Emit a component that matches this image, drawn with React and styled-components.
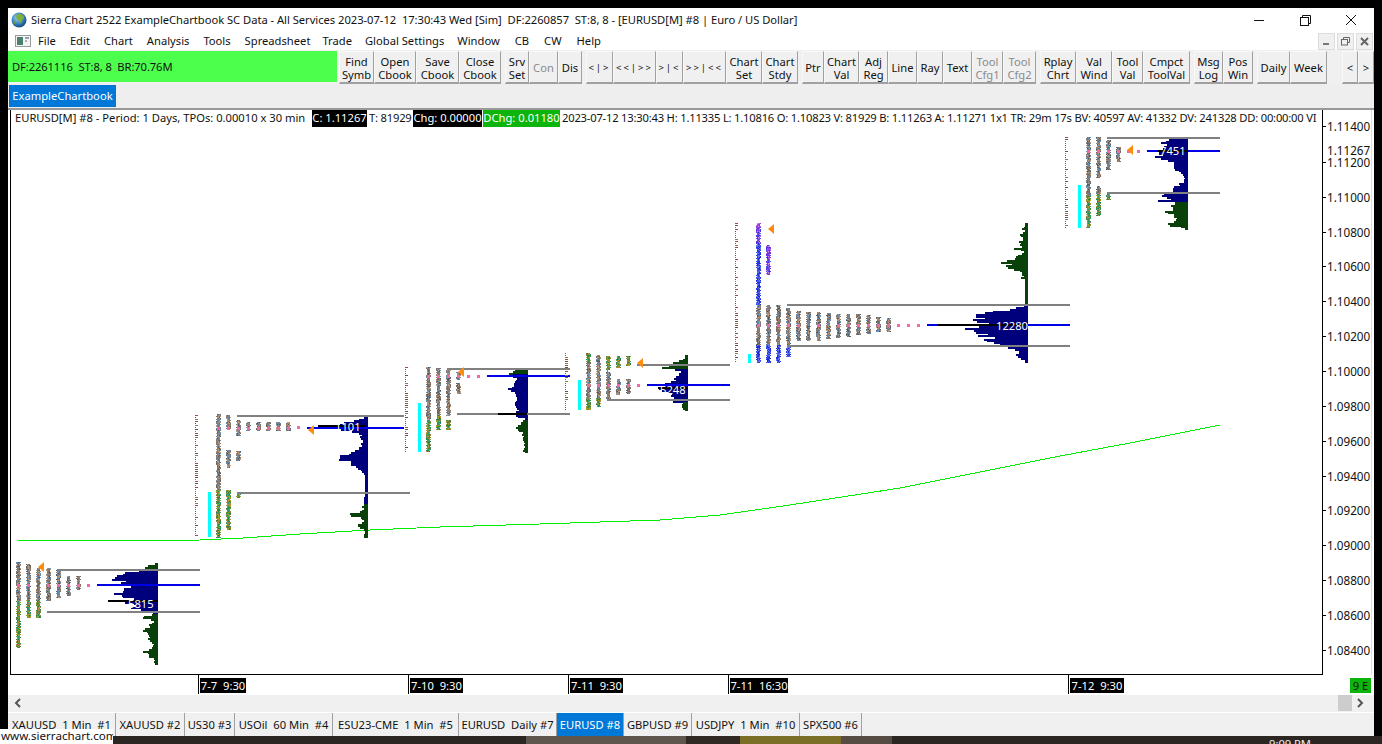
import React from "react";
import styled, { createGlobalStyle } from "styled-components";

const FONT = `"Noto Sans", "Open Sans", "Liberation Sans", sans-serif`;

const Global = createGlobalStyle`
  html, body { margin: 0; padding: 0; background: #000; }
  * { box-sizing: border-box; }
`;

const Screen = styled.div`
  position: relative; width: 1382px; height: 744px; background: #000; overflow: hidden;
  display: flex; flex-direction: column; font: 11.2px/14px ${FONT}; color: #111;
`;
const Win = styled.div`
  margin: 8px 8px 0; height: 728px; flex: none; display: flex; flex-direction: column; background: #f0f0f0;
`;
const TitleBar = styled.div`
  height: 24px; flex: none; background: #fff; display: flex; align-items: center; padding-left: 3px; white-space: pre;
`;
const TitleText = styled.span`
  margin-left: 4px; flex: 1; letter-spacing: -0.03px;
`;
const WinBtn = styled.button`
  border: 0; background: none; padding: 0; width: ${p => p.$w}px; height: 24px; display: flex; align-items: center; justify-content: center;
`;
const MenuBar = styled.div`
  height: 18px; flex: none; background: #fff; display: flex; align-items: center; padding-left: 7px; position: relative;
`;
const MenuItem = styled.span`
  margin-left: ${p => p.$ml}px; white-space: nowrap;
`;
const MdiGroup = styled.div`
  margin-left: auto; display: flex; gap: 2px; padding-right: 1px;
`;
const MdiBtn = styled.button`
  width: 17px; height: 17px; padding: 0; border: 1px solid #dcdcdc; background: #f0f0f0; display: flex; align-items: center; justify-content: center;
`;
const Toolbar = styled.div`
  height: 34px; flex: none; display: flex; padding-top: 1px; background: #f0f0f0;
`;
const Status = styled.div`
  width: 329px; height: 31px; background: #4dff4d; display: flex; align-items: center; padding-left: 4px; white-space: pre; margin-right: 2px; letter-spacing: -0.1px;
`;
const Group = styled.div`
  display: flex; margin-right: ${p => p.$mr ?? 4}px;
`;
const Btn = styled.button`
  width: ${p => p.$w}px; height: 33px; padding: 1px 0 0; background: #f0f0f0;
  border: 0; border-top: 1px solid #f8f8f8; border-left: 1px solid #f8f8f8;
  border-right: 1px solid #a0a0a0; border-bottom: 2px solid #a0a0a0;
  font: 11.2px/13px ${FONT}; color: ${p => p.$off ? "#8a8a8a" : "#111"};
  font-size: ${p => p.$ls ? 9.5 : 11.2}px;
  letter-spacing: ${p => p.$ls || 0}px; white-space: pre; text-align: center;
`;
const BookBar = styled.div`
  height: 24px; flex: none; background: #eee; padding: 1px 0 0 1px;
`;
const BookTab = styled.div`
  width: 107px; height: 22px; background: #0078d7; color: #fff; display: flex; align-items: center; justify-content: center;
`;
const ChartWrap = styled.div`
  height: 587px; flex: none; border-top: 2px solid #999; padding-left: 2px; background: #fff;
  display: grid; grid-template-columns: 1313px 1fr; grid-template-rows: 565px 20px;
`;
const Plot = styled.div`
  border-left: 1px solid #000; border-right: 1px solid #000; border-bottom: 1px solid #000; display: flex; flex-direction: column; overflow: hidden; background: #fff;
`;
const Header = styled.div`
  height: 17px; flex: none; display: flex; white-space: pre; overflow: hidden; padding-left: 4px; line-height: 16px;
`;
const Seg = styled.span`
  flex: none; width: ${p => p.$w ? p.$w + "px" : "auto"}; margin-left: ${p => p.$ml || 0}px; background: ${p => p.$bg || "transparent"};
  color: ${p => p.$bg ? "#fff" : "#111"}; text-align: ${p => p.$bg ? "center" : "left"}; letter-spacing: ${p => p.$ls || 0}px;
`;
const Chart = styled.svg`
  display: block; width: 1311px; height: 547px; flex: none;
`;
const PriceAxis = styled.div`
  position: relative; background: #fff; margin-right: 2px; border-right: 1px solid #ddd;
`;
const Price = styled.span.attrs(p => ({ style: { top: p.$y - 110 - 8 + "px" } }))`
  position: absolute; left: 4px; font-size: 11.7px; line-height: 16px;
  &::before { content: ""; position: absolute; left: -4px; top: 8px; width: 3px; height: 1px; background: ${p => p.$tick ? "#000" : "transparent"}; }
`;
const TimeAxis = styled.div`
  position: relative; background: #fff;
`;
const Tick = styled.i.attrs(p => ({ style: { left: p.$x - 11 + "px" } }))`
  position: absolute; top: 0; width: 1px; height: 19px; background: #000;
`;
const TimeLabel = styled.span.attrs(p => ({ style: { left: p.$x - 11 + "px", width: p.$w + "px" } }))`
  position: absolute; top: 3px; height: 15px; line-height: 15px; background: #000; color: #fff; text-align: center; white-space: pre;
`;
const Corner = styled.div`
  position: relative; background: #fff;
`;
const Badge = styled.span`
  position: absolute; left: 27px; top: 3px; width: 21px; height: 15px; background: #0cb40c; color: #111; line-height: 15px; text-align: center; white-space: pre;
`;
const ScrollBar = styled.div`
  height: 16px; flex: none; background: #f0f0f0; display: flex; align-items: center; padding-left: 6px; margin-bottom: 1px;
`;
const Thumb = styled.div`
  margin-left: auto; width: 14px; height: 16px; background: #cdcdcd;
`;
const ArrowCell = styled.div`
  width: 22px; display: flex; align-items: center; justify-content: flex-start; padding-left: 4px;
`;
const Tabs = styled.div`
  height: 24px; flex: none; display: flex; background: #f0f0f0; border-top: 1px solid #fff;
`;
const Tab = styled.div`
  width: ${p => p.$w}px; flex: none; height: 23px; white-space: pre; display: flex; align-items: center; justify-content: center;
  background: ${p => p.$on ? "#0078d7" : "#f0f0f0"}; color: ${p => p.$on ? "#fff" : "#111"};
  border-right: 1px solid #a0a0a0;
`;
const Desktop = styled.div`
  flex: 1; display: flex; background: #2c2622; overflow: hidden;
`;
const Patch = styled.div`
  width: ${p => p.$w}px; flex: none; background: ${p => p.$c};
`;
const Clock = styled.span`
  color: #eee; position: absolute; left: 1269px; top: 737px; line-height: 14px; white-space: pre;
`;
const SiteLabel = styled.div`
  position: absolute; left: 0; top: 729px; width: 113px; height: 15px; background: #fff; color: #111; line-height: 14px; padding-left: 1px; font-size: 11.6px; white-space: nowrap; overflow: hidden;
`;

const groups = [
  [["Find\nSymb", 35], ["Open\nCbook", 42], ["Save\nCbook", 43], ["Close\nCbook", 42]],
  [["Srv\nSet", 24], ["Con", 29, true], ["Dis", 24]],
  [["<|>", 27, false, 2], ["<<|>>", 43, false, 2], [">|<", 27, false, 2], [">>|<<", 43, false, 2], ["Chart\nSet", 36], ["Chart\nStdy", 36]],
  [["Ptr", 22], ["Chart\nVal", 35], ["Adj\nReg", 29], ["Line", 29], ["Ray", 26], ["Text", 29], ["Tool\nCfg1", 31, true], ["Tool\nCfg2", 33, true]],
  [["Rplay\nChrt", 36], ["Val\nWind", 36], ["Tool\nVal", 31], ["Cmpct\nToolVal", 47]],
  [["Msg\nLog", 29], ["Pos\nWin", 30]],
];
const prices = [
  ["1.11400", 126, 1], ["1.11267", 150, 0], ["1.11200", 162, 1], ["1.11000", 197, 1], ["1.10800", 232, 1], ["1.10600", 266, 1],
  ["1.10400", 301, 1], ["1.10200", 336, 1], ["1.10000", 371, 1], ["1.09800", 406, 1], ["1.09600", 441, 1], ["1.09400", 476, 1],
  ["1.09200", 510, 1], ["1.09000", 545, 1], ["1.08800", 580, 1], ["1.08600", 615, 1], ["1.08400", 650, 1],
];
const times = [["7-7  9:30", 199, 46], ["7-10  9:30", 409, 53], ["7-11  9:30", 569, 53], ["7-11  16:30", 729, 58], ["7-12  9:30", 1069, 54]];
const tabs = [
  ["XAUUSD  1 Min  #1", 108], ["XAUUSD #2", 69], ["US30 #3", 50], ["USOil  60 Min  #4", 98], ["ESU23-CME  1 Min  #5", 126],
  ["EURUSD  Daily #7", 98], ["EURUSD #8", 67, true], ["GBPUSD #9", 68], ["USDJPY  1 Min  #10", 108], ["SPX500 #6", 62],
];

const rnd = s => { const x = Math.sin(s * 12.9898) * 43758.5453; return x - Math.floor(x); };
const tones = {
  n: ["#7a7f88", "#8f7868", "#5f8fb8", "#b89878", "#4f5f68", "#85705f"],
  g: ["#1f8a50", "#88982f", "#2f9868", "#a89e28", "#4f7f40", "#b08040"],
  p: ["#7030d8", "#3838e8", "#b850d8", "#9040e0", "#5050e8", "#d880e8"],
  b: ["#2040e8", "#5a74f0", "#2030c8", "#4050d8", "#1828d8", "#7070f0"],
};
const profiles = [
  {
    axis: 158, y0: 563, y1: 663, split: [570, 612],
    pts: [[564, 5], [567, 18], [569, 14], [571, 25], [574, 40], [578, 40], [582, 35], [588, 34], [592, 36], [594, 41], [596, 30], [599, 25], [604, 30], [608, 22], [611, 3], [613, 5], [615, 10], [616, 19], [619, 6], [622, 5], [626, 10], [630, 14], [633, 10], [636, 7], [640, 10], [643, 3], [647, 6], [651, 14], [655, 10], [658, 3], [662, 3]],
    gray: [[570, 57, 200], [612, 47, 200]], blue: [585, 97, 200], black: [601, 108, 158], label: ["5815", 128, 608],
    dots: [], cyan: null, tri: [38, 562],
    cols: [[18, 562, 648, [[601, "g"]]], [28, 564, 618, [[600, "g"]]], [38, 568, 618, [[600, "g"]]], [48, 568, 601], [58, 570, 598], [68, 576, 596], [78, 576, 590]],
    pink: [[18, 585], [28, 585], [48, 585], [58, 585], [68, 585], [78, 585], [88, 585]],
  },
  {
    axis: 368, y0: 415, y1: 537, split: [416, 504],
    pts: [[416, 3], [418, 8], [420, 14], [423, 25], [426, 30], [430, 20], [433, 8], [440, 5], [445, 7], [449, 10], [453, 20], [456, 28], [459, 30], [461, 18], [465, 14], [468, 8], [475, 3], [485, 3], [495, 3], [503, 4], [506, 6], [510, 5], [512, 8], [514, 24], [516, 9], [520, 4], [522, 8], [524, 10], [530, 3], [536, 4]],
    gray: [[416, 237, 404], [493, 237, 410]], blue: [428, 307, 404], black: [426, 318, 365], label: ["1101", 335, 431],
    dots: [196, 415, 537], cyan: [208, 492, 537], tri: [308, 425],
    cols: [[218, 414, 538, [[490, "g"]]], [228, 415, 430], [228, 450, 468], [228, 490, 530, [[490, "g"]]], [238, 420, 436], [238, 451, 461], [238, 492, 498, [[492, "g"]]], [248, 422, 431], [258, 422, 431], [268, 422, 431], [278, 422, 431], [288, 422, 431]],
    pink: [[218, 428], [228, 428], [238, 428], [248, 428], [258, 428], [268, 428], [278, 428], [288, 428], [298, 427]],
  },
  {
    axis: 528, y0: 369, y1: 452, split: [374, 419],
    pts: [[370, 16], [372, 17], [374, 15], [376, 15], [378, 10], [380, 15], [385, 12], [387, 18], [389, 20], [391, 15], [395, 10], [398, 15], [400, 10], [403, 12], [406, 10], [409, 10], [412, 12], [416, 10], [418, 3], [420, 5], [424, 8], [426, 10], [428, 12], [431, 6], [436, 4], [440, 4], [445, 3], [449, 5], [452, 3]],
    gray: [[369, 447, 570], [414, 457, 570]], blue: [376, 487, 570], black: [414, 498, 527], label: null,
    dots: [406, 367, 453], cyan: [418, 403, 452], tri: [458, 367],
    cols: [[428, 367, 452, [[420, "g"]]], [438, 368, 430, [[415, "g"]]], [448, 370, 416], [448, 420, 430, [[420, "g"]]], [458, 372, 380], [458, 383, 394]],
    pink: [[428, 376], [438, 376], [448, 376], [458, 376], [468, 376], [478, 376]],
  },
  {
    axis: 688, y0: 355, y1: 410, split: [369, 401],
    pts: [[355, 2], [358, 4], [360, 8], [362, 15], [364, 22], [367, 25], [370, 5], [372, 10], [375, 10], [378, 12], [380, 14], [383, 20], [386, 22], [388, 28], [390, 28], [392, 20], [395, 15], [398, 18], [400, 18], [402, 4], [405, 6], [409, 3]],
    gray: [[365, 637, 730], [400, 607, 730]], blue: [385, 647, 730], black: [388, 658, 688], label: ["5248", 660, 394],
    dots: [566, 353, 410], cyan: [578, 380, 410], tri: [637, 358], vline: [607, 370, 400],
    cols: [[588, 353, 410, [[353, "g"], [362, "n"], [398, "g"]]], [598, 355, 407, [[398, "g"]]], [608, 356, 370, [[356, "g"]]], [608, 372, 399], [618, 356, 368, [[356, "g"]]], [618, 379, 395], [628, 356, 366, [[356, "g"]]], [628, 379, 394]],
    pink: [[588, 385], [598, 385], [608, 385], [618, 385], [628, 385], [638, 385]],
  },
  {
    axis: 1028, y0: 223, y1: 362, split: [223, 223], green1: [223, 305],
    pts: [[224, 3], [226, 3], [228, 7], [230, 3], [233, 8], [236, 5], [238, 4], [240, 8], [242, 6], [244, 8], [246, 5], [248, 15], [250, 3], [252, 6], [254, 10], [257, 16], [259, 10], [261, 33], [263, 16], [265, 20], [267, 22], [270, 8], [272, 7], [275, 4], [277, 6], [280, 3], [305, 2], [306, 10], [308, 12], [310, 35], [312, 35], [315, 50], [318, 55], [320, 52], [322, 45], [325, 30], [327, 50], [330, 60], [333, 50], [336, 40], [338, 35], [340, 42], [342, 40], [345, 25], [348, 15], [350, 12], [352, 8], [354, 12], [356, 10], [358, 6], [360, 3], [362, 3]],
    gray: [[305, 787, 1070], [346, 787, 1070]], blue: [325, 927, 1070], black: [325, 938, 1027], label: ["12280", 996, 330],
    dots: [736, 223, 363], cyan: [748, 354, 363], tri: [768, 224],
    cols: [[758, 223, 244, [[223, "p"]]], [758, 244, 305, [[244, "b"]]], [758, 305, 345], [758, 345, 363, [[345, "b"]]], [768, 245, 275, [[245, "p"]]], [768, 305, 345], [768, 345, 363, [[345, "b"]]], [778, 305, 345], [778, 345, 363, [[345, "b"]]], [788, 308, 345], [788, 347, 357, [[347, "b"]]],
      [798, 311, 341], [808, 312, 341], [818, 312, 341], [828, 313, 339], [838, 314, 338], [848, 314, 337], [858, 314, 335], [868, 315, 334], [878, 317, 332], [888, 318, 332]],
    pink: [[758, 325], [768, 325], [778, 325], [788, 325], [798, 325], [818, 325], [838, 325], [848, 325], [858, 325], [868, 325], [878, 325], [888, 325], [898, 325], [908, 325], [918, 325]],
  },
  {
    axis: 1188, y0: 137, y1: 228, split: [137, 200],
    pts: [[137, 15], [139, 20], [141, 24], [143, 22], [146, 25], [148, 28], [150, 28], [153, 28], [155, 29], [157, 28], [159, 20], [162, 15], [165, 14], [168, 14], [170, 12], [175, 4], [180, 4], [183, 8], [186, 12], [189, 14], [191, 12], [193, 20], [195, 22], [198, 18], [200, 27], [202, 14], [204, 15], [208, 17], [210, 20], [212, 22], [214, 15], [216, 13], [218, 12], [220, 10], [222, 19], [224, 19], [226, 10], [228, 3]],
    gray: [[138, 1107, 1220], [193, 1107, 1220]], blue: [151, 1147, 1220], black: [151, 1158, 1188], label: ["7451", 1160, 155],
    dots: [1066, 137, 228], cyan: [1078, 185, 228], tri: [1127, 145],
    cols: [[1088, 137, 228, [[196, "g"]]], [1098, 137, 178], [1098, 186, 216, [[194, "g"]]], [1108, 140, 170], [1108, 194, 200, [[194, "g"]]], [1118, 147, 162]],
    pink: [[1088, 151], [1098, 151], [1108, 151], [1118, 151], [1128, 151], [1138, 151]],
  },
];

const widthAt = (pts, y) => {
  for (let i = 1; i < pts.length; i++) {
    if (y <= pts[i][0]) {
      const [a, wa] = pts[i - 1], [b, wb] = pts[i];
      return wa + ((wb - wa) * (y - a)) / Math.max(1, b - a);
    }
  }
  return pts[pts.length - 1][1];
};

function Volume({ p, idx }) {
  const rows = [];
  const inNavy = y => y >= p.split[0] && y <= p.split[1];
  const navyFromGreen = p.green1 ? y => y > p.green1[1] : inNavy;
  for (let y = p.y0, i = 0; y <= p.y1; y += 1.75, i++) {
    const base = widthAt(p.pts, y);
    const w = Math.max(3, base * (0.78 + 0.42 * rnd(idx * 100 + i)));
    rows.push(<rect key={i} x={p.axis - w} y={Math.round(y)} width={w} height={2} fill={navyFromGreen(y) ? "#00007c" : "#0a400a"} />);
  }
  return <g shapeRendering="crispEdges">{rows}</g>;
}

function Column({ c, idx }) {
  const [x, y0, y1, zones = []] = c;
  const out = [];
  for (let y = y0, i = 0; y < y1; y++, i++) {
    let tone = "n";
    zones.forEach(z => { if (y >= z[0]) tone = z[1]; });
    const pal = tones[tone];
    for (let k = 0; k < 5; k++) {
      const s = idx * 37 + x * 3 + i * 7 + k * 13;
      if ((k === 0 || k === 4) && rnd(s + 9) > 0.55) continue;
      out.push(<rect key={i + "-" + k} x={x - 2 + k} y={y} width={1} height={1} fill={pal[Math.floor(rnd(s) * pal.length)]} />);
    }
  }
  return <g shapeRendering="crispEdges">{out}</g>;
}

function Dots({ d, idx }) {
  const [x, y0, y1] = d;
  const out = [];
  for (let y = y0, i = 0; y < y1; y += 2, i++) {
    const w = rnd(idx * 11 + i) > 0.45 ? 3 : 1;
    out.push(<rect key={i} x={x - 1} y={y} width={w} height={1} fill={i % 3 === 0 ? "#a04848" : i % 3 === 1 ? "#555" : "#8a7a50"} />);
  }
  return <g shapeRendering="crispEdges">{out}</g>;
}

const greenLine = "18,540 150,541 200,540 243,538 300,534 370,530 440,527 540,524 600,522 660,520 720,515 790,505 900,488 950,478 1060,456 1130,443 1220,425";

function ChartDrawing() {
  return (
    <Chart viewBox="11 127 1311 547">
      <polyline points={greenLine} fill="none" stroke="#00ee00" strokeWidth="1" shapeRendering="crispEdges" />
      {profiles.map((p, i) => (
        <g key={i}>
          {p.dots.length > 0 && <Dots d={p.dots} idx={i} />}
          {p.cyan && <rect x={p.cyan[0]} y={p.cyan[1]} width={3} height={p.cyan[2] - p.cyan[1]} fill="#00ffff" shapeRendering="crispEdges" />}
          {p.cols.map((c, j) => <Column key={j} c={c} idx={i + j} />)}
          {p.pink.map((k, j) => <rect key={j} x={k[0] - 1} y={k[1] - 1} width={3} height={3} fill="#ee6aa8" shapeRendering="crispEdges" />)}
          {p.vline && <rect x={p.vline[0]} y={p.vline[1]} width={1} height={p.vline[2] - p.vline[1]} fill="#808080" shapeRendering="crispEdges" />}
          <Volume p={p} idx={i + 1} />
          <g shapeRendering="crispEdges">
            {p.gray.map((g, j) => <rect key={j} x={g[1]} y={g[0] - 1} width={g[2] - g[1]} height={2} fill="#808080" />)}
            <rect x={p.blue[1]} y={p.blue[0] - 1} width={p.blue[2] - p.blue[1]} height={2} fill="#0000e6" />
            <rect x={p.black[1]} y={p.black[0] - 1} width={p.black[2] - p.black[1]} height={2} fill="#000" />
          </g>
          {p.label && <text x={p.label[1]} y={p.label[2]} fill="#fff" fontSize="11.2" fontFamily="Noto Sans, sans-serif">{p.label[0]}</text>}
          <polygon points={`${p.tri[0]},${p.tri[1] + 5} ${p.tri[0] + 6},${p.tri[1]} ${p.tri[0] + 6},${p.tri[1] + 10}`} fill="#ff8c10" />
        </g>
      ))}
    </Chart>
  );
}

const Globe = () => (
  <svg width="16" height="16" viewBox="0 0 16 16">
    <defs>
      <radialGradient id="gl" cx="0.4" cy="0.35" r="0.75">
        <stop offset="0" stopColor="#9fd3f0" />
        <stop offset="0.6" stopColor="#2f78b8" />
        <stop offset="1" stopColor="#123a66" />
      </radialGradient>
    </defs>
    <circle cx="8" cy="8" r="7.5" fill="url(#gl)" />
    <path d="M6 2.5c2-1 5-.5 6.5 1.5.8 1.4.3 3-1 3.8-1 .8-.7 2.6-2 3.6-1 .4-1.5-1-1.5-2.2 0-1-1.6-1.2-2.2-2.2C5 5.800 5 3.500 6 2.500z" fill="#7fae3a" />
    <path d="M2 8c1 .4 2 1.600 2.500 3 .3 1-.3 1.500-1 1A7 7 0 0 1 2 8z" fill="#6f9e34" />
  </svg>
);
const MenuIcon = () => (
  <svg width="16" height="12" viewBox="0 0 16 12">
    <rect x="0.5" y="0.5" width="15" height="11" fill="#f4f4f4" stroke="#9a9a9a" />
    <rect x="2" y="2" width="6" height="8" fill="#4d7f70" />
    <rect x="10" y="2" width="4" height="2" fill="#8aa0c0" />
    <rect x="10" y="5" width="2" height="2" fill="#b0b0b0" />
  </svg>
);
const WMin = () => <svg width="11" height="11" viewBox="0 0 11 11"><path d="M0 5.500h10" stroke="#111" /></svg>;
const WRest = () => <svg width="11" height="11" viewBox="0 0 11 11" fill="none" stroke="#111"><path d="M2.500 2.500v-2h8v8h-2" /><rect x="0.500" y="2.500" width="8" height="8" /></svg>;
const WClose = () => <svg width="12" height="12" viewBox="0 0 12 12" stroke="#111"><path d="M1 1l10 10M11 1L1 11" /></svg>;
const MMin = () => <svg width="9" height="9" viewBox="0 0 9 9"><rect x="1" y="6" width="6" height="2" fill="#777" /></svg>;
const MRest = () => <svg width="9" height="9" viewBox="0 0 9 9" fill="none" stroke="#666"><path d="M2.500 2V.5h6v5H7" /><rect x="0.500" y="2.500" width="6" height="5.500" /></svg>;
const MClose = () => <svg width="9" height="9" viewBox="0 0 9 9" stroke="#666" strokeWidth="2"><path d="M1 1l7 7M8 1L1 8" /></svg>;
const Chev = ({ left }) => (
  <svg width="8" height="10" viewBox="0 0 8 10" fill="none" stroke="#555" strokeWidth="2">
    <path d={left ? "M6 1L2 5l4 4" : "M2 1l4 4-4 4"} />
  </svg>
);

const menu = [["File", 7], ["Edit", 14], ["Chart", 14], ["Analysis", 14], ["Tools", 14], ["Spreadsheet", 14], ["Trade", 12], ["Global Settings", 13], ["Window", 13], ["CB", 15], ["CW", 15], ["Help", 15]];

export default function App() {
  return (
    <Screen>
      <Global />
      <Win>
        <TitleBar>
          <Globe />
          <TitleText>{"Sierra Chart 2522 ExampleChartbook SC Data - All Services 2023-07-12  17:30:43 Wed [Sim]  DF:2260857  ST:8, 8 - [EURUSD[M] #8 | Euro / US Dollar]"}</TitleText>
          <WinBtn $w={46}><WMin /></WinBtn>
          <WinBtn $w={46}><WRest /></WinBtn>
          <WinBtn $w={46}><WClose /></WinBtn>
        </TitleBar>
        <MenuBar>
          <MenuIcon />
          {menu.map(m => <MenuItem key={m[0]} $ml={m[1]}>{m[0]}</MenuItem>)}
          <MdiGroup>
            <MdiBtn><MMin /></MdiBtn>
            <MdiBtn><MRest /></MdiBtn>
            <MdiBtn><MClose /></MdiBtn>
          </MdiGroup>
        </MenuBar>
        <Toolbar>
          <Status>{"DF:2261116  ST:8, 8  BR:70.76M"}</Status>
          {groups.map((g, i) => (
            <Group key={i}>
              {g.map(b => <Btn key={b[0]} $w={b[1]} $off={b[2]} $ls={b[3]}>{b[0]}</Btn>)}
            </Group>
          ))}
          <Group $mr={15}>
            <Btn $w={33}>Daily</Btn>
            <Btn $w={37}>Week</Btn>
          </Group>
          <Group $mr={0}>
            <Btn $w={16}>{"<"}</Btn>
            <Btn $w={16}>{">"}</Btn>
          </Group>
        </Toolbar>
        <BookBar><BookTab>ExampleChartbook</BookTab></BookBar>
        <ChartWrap>
          <Plot>
            <Header>
              <Seg $w={297}>{"EURUSD[M] #8 - Period: 1 Days, TPOs: 0.00010 x 30 min"}</Seg>
              <Seg $bg="#000" $w={55}>C: 1.11267</Seg>
              <Seg $ml={2} $w={42} $ls={-0.2}>T: 81929</Seg>
              <Seg $ml={2} $bg="#000" $w={69}>Chg: 0.00000</Seg>
              <Seg $ml={1} $bg="#0cb40c" $w={77}>DChg: 0.01180</Seg>
              <Seg $ml={2} $ls={-0.2}>{"2023-07-12 13:30:43 H: 1.11335 L: 1.10816 O: 1.10823 V: 81929 B: 1.11263 A: 1.11271 1x1 TR: 29m 17s BV: 40597 AV: 41332 DV: 241328 DD: 00:00:00 VI"}</Seg>
            </Header>
            <ChartDrawing />
          </Plot>
          <PriceAxis>
            {prices.map(p => <Price key={p[0]} $y={p[1]} $tick={p[2]}>{p[0]}</Price>)}
          </PriceAxis>
          <TimeAxis>
            {times.map(t => (
              <React.Fragment key={t[0]}>
                <Tick $x={t[1]} />
                <TimeLabel $x={t[1] + 2} $w={t[2]}>{t[0]}</TimeLabel>
              </React.Fragment>
            ))}
          </TimeAxis>
          <Corner><Badge>9 E</Badge></Corner>
        </ChartWrap>
        <ScrollBar>
          <Chev left />
          <Thumb />
          <ArrowCell><Chev /></ArrowCell>
        </ScrollBar>
        <Tabs>
          {tabs.map(t => <Tab key={t[0]} $w={t[1]} $on={t[2]}>{t[0]}</Tab>)}
        </Tabs>
      </Win>
      <Desktop>
        <Patch $w={526} $c="#2c2622" />
        <Patch $w={160} $c="#5f574e" />
        <Patch $w={54} $c="#2f2823" />
        <Patch $w={101} $c="#7b6f28" />
        <Patch $w={51} $c="#564c44" />
      </Desktop>
      <Clock>9:09 PM</Clock>
      <SiteLabel>www.sierrachart.com</SiteLabel>
    </Screen>
  );
}
